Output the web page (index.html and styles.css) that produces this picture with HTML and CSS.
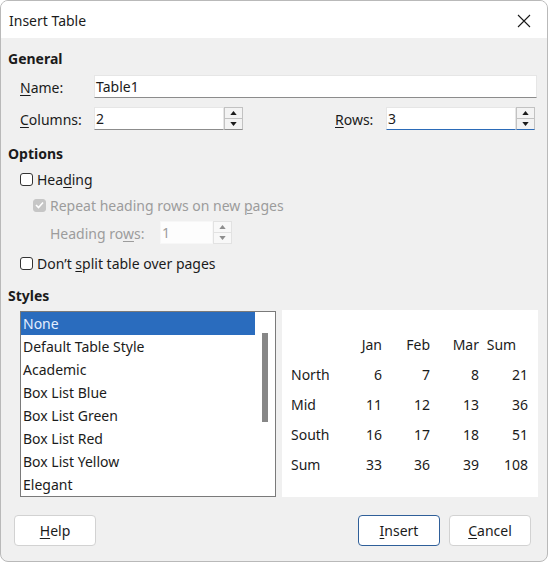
FILE: index.html
```html
<!DOCTYPE html>
<html lang="en">
<head>
  <meta charset="UTF-8">
  <title>Insert Table</title>
  <link rel="stylesheet" href="styles.css">
</head>
<body>
  <div class="dialog">
    <div class="titlebar">
      <span class="title">Insert Table</span>
      <svg class="close" width="14" height="14" viewBox="0 0 14 14"><path d="M1 1L13 13M13 1L1 13" stroke="#1a1a1a" stroke-width="1.1" fill="none"/></svg>
    </div>

    <div class="content">
      <div class="section first">General</div>
      <div class="row name-row">
        <span class="lbl"><u>N</u>ame:</span>
        <div class="field name-field">Table1</div>
      </div>
      <div class="row cols-row">
        <span class="lbl"><u>C</u>olumns:</span>
        <div class="spin">
          <div class="field">2</div>
          <div class="spin-btns">
            <span class="up"><svg width="8" height="5" viewBox="0 0 8 5"><polygon points="0,5 8,5 4,0"/></svg></span>
            <span class="down"><svg width="8" height="5" viewBox="0 0 8 5"><polygon points="0,0 8,0 4,5"/></svg></span>
          </div>
        </div>
        <span class="lbl rows-lbl"><u>R</u>ows:</span>
        <div class="spin focus">
          <div class="field">3</div>
          <div class="spin-btns">
            <span class="up"><svg width="8" height="5" viewBox="0 0 8 5"><polygon points="0,5 8,5 4,0"/></svg></span>
            <span class="down"><svg width="8" height="5" viewBox="0 0 8 5"><polygon points="0,0 8,0 4,5"/></svg></span>
          </div>
        </div>
      </div>

      <div class="section options">Options</div>
      <div class="check-row heading-row">
        <span class="box"></span>
        <span class="text">Hea<u>d</u>ing</span>
      </div>
      <div class="check-row repeat-row disabled">
        <span class="box checked">
          <svg width="9" height="8" viewBox="0 0 9 8"><path d="M1 4L3.5 6.5L8 1.5" stroke="#fff" stroke-width="1.6" fill="none"/></svg>
        </span>
        <span class="text">Repeat heading rows on new <u>p</u>ages</span>
      </div>
      <div class="row hrows-row disabled">
        <span class="lbl hrows-lbl">Heading ro<u>w</u>s:</span>
        <div class="spin small">
          <div class="field">1</div>
          <div class="spin-btns">
            <span class="up"><svg width="8" height="5" viewBox="0 0 8 5"><polygon points="0,5 8,5 4,0"/></svg></span>
            <span class="down"><svg width="8" height="5" viewBox="0 0 8 5"><polygon points="0,0 8,0 4,5"/></svg></span>
          </div>
        </div>
      </div>
      <div class="check-row split-row">
        <span class="box"></span>
        <span class="text">Don’t <u>s</u>plit table over pages</span>
      </div>

      <div class="section styles">Styles</div>
      <div class="styles-area">
        <div class="listbox">
          <ul class="items">
            <li class="selected">None</li>
            <li>Default Table Style</li>
            <li>Academic</li>
            <li>Box List Blue</li>
            <li>Box List Green</li>
            <li>Box List Red</li>
            <li>Box List Yellow</li>
            <li>Elegant</li>
          </ul>
          <div class="scrollbar"><div class="thumb"></div></div>
        </div>
        <div class="preview">
          <div class="ptable">
            <span></span><span class="num">Jan</span><span class="num">Feb</span><span class="num">Mar</span><span class="sum-head">Sum</span>
            <span>North</span><span class="num">6</span><span class="num">7</span><span class="num">8</span><span class="num">21</span>
            <span>Mid</span><span class="num">11</span><span class="num">12</span><span class="num">13</span><span class="num">36</span>
            <span>South</span><span class="num">16</span><span class="num">17</span><span class="num">18</span><span class="num">51</span>
            <span>Sum</span><span class="num">33</span><span class="num">36</span><span class="num">39</span><span class="num">108</span>
          </div>
        </div>
      </div>

      <div class="buttons">
        <button class="btn"><u>H</u>elp</button>
        <div class="right-buttons">
          <button class="btn default"><u>I</u>nsert</button>
          <button class="btn"><u>C</u>ancel</button>
        </div>
      </div>
    </div>
  </div>
</body>
</html>
```

FILE: styles.css
```css
body {
  margin: 0;
  padding: 0;
  font-family: "Noto Sans", Lato, sans-serif;
  font-size: 14px;
  color: #1b1b1b;
  background: #ffffff;
}

u {
  text-decoration-thickness: 1px;
  text-underline-offset: 2px;
}

.dialog {
  width: 548px;
  height: 562px;
  box-sizing: border-box;
  border: 1px solid #b9b9b9;
  border-radius: 8px;
  background: #f0f0f0;
  overflow: hidden;
}

.titlebar {
  height: 37px;
  background: #ffffff;
  display: flex;
  align-items: center;
  justify-content: space-between;
  padding: 0 16px 0 8px;
}

.title {
  padding-top: 1px;
}

.close {
  margin-top: 2px;
}

.content {
  padding: 0 0 0 7px;
}

.section {
  font-weight: bold;
  line-height: 21px;
  height: 20px;
}

.section.first { margin-top: 10px; }
.section.options { margin-top: 13px; }
.section.styles { margin-top: 12px; }

.row {
  display: flex;
  align-items: center;
  padding-left: 12px;
  height: 23px;
}

.name-row { margin-top: 7px; }
.cols-row { margin-top: 9px; }

.lbl {
  width: 74px;
  flex-shrink: 0;
  padding-top: 1px;
}

.field {
  box-sizing: border-box;
  height: 23px;
  line-height: 22px;
  padding-left: 1px;
  background: #ffffff;
  border: 1px solid #e6e6e6;
  border-bottom: 1px solid #8c8c8c;
}

.name-field {
  width: 443px;
}

.spin {
  display: flex;
  width: 149px;
  height: 23px;
}

.spin .field {
  width: 130px;
}

.spin-btns {
  width: 19px;
  height: 23px;
  box-sizing: border-box;
  border: 1px solid #c2c2c2;
  border-bottom-color: #8c8c8c;
  background: #f3f3f3;
  display: flex;
  flex-direction: column;
}

.spin-btns span {
  flex: 1;
  display: flex;
  align-items: center;
  justify-content: center;
}

.spin-btns .up {
  border-bottom: 1px solid #c2c2c2;
}

.spin-btns svg {
  width: 7px;
  height: 4px;
}

.spin-btns polygon {
  fill: #1b1b1b;
}

.rows-lbl {
  width: 51px;
  margin-left: 92px;
}

.spin.focus .field {
  border-bottom: 1px solid #2b6bb8;
}

.spin.focus .spin-btns {
  border-bottom-color: #2b6bb8;
}

.check-row {
  display: flex;
  align-items: center;
  height: 20px;
  padding-left: 12px;
  gap: 4px;
}

.check-row .text {
  padding-top: 1px;
}

.heading-row { margin-top: 6px; }
.repeat-row { margin-top: 6px; padding-left: 25px; }
.split-row { margin-top: 9px; }

.box {
  width: 13px;
  height: 13px;
  box-sizing: border-box;
  border: 1px solid #333333;
  border-radius: 3px;
  background: #ffffff;
  display: flex;
  align-items: center;
  justify-content: center;
}

.box.checked {
  background: #c6c6c6;
  border-color: #c6c6c6;
}

.disabled {
  color: #9c9c9c;
}

.hrows-row {
  margin-top: 6px;
  padding-left: 42px;
}

.hrows-lbl {
  width: 110px;
}

.spin.small {
  width: 72px;
}

.spin.small .field {
  width: 53px;
  border-color: #f7f7f7;
  border-bottom-color: #f7f7f7;
  background: #fdfdfd;
}

.spin.small .spin-btns {
  border-color: #e2e2e2;
  background: #f8f8f8;
}

.spin.small .spin-btns .up {
  border-bottom-color: #e2e2e2;
}

.spin.small polygon {
  fill: #8e8e8e;
}

.styles-area {
  display: flex;
  margin-top: 5px;
  padding-left: 12px;
  gap: 6px;
  height: 187px;
}

.listbox {
  width: 256px;
  height: 186px;
  margin-top: 1px;
  box-sizing: border-box;
  border: 1px solid #7a7a7a;
  background: #ffffff;
  display: flex;
}

.items {
  list-style: none;
  margin: 0;
  padding: 0;
  width: 234px;
}

.items li {
  height: 23px;
  line-height: 24px;
  padding-left: 2px;
}

.items li.selected {
  background: #2a6cbe;
  color: #e4eeff;
}

.scrollbar {
  flex: 1;
  position: relative;
}

.thumb {
  position: absolute;
  left: 7px;
  top: 21px;
  width: 6px;
  height: 89px;
  background: #878787;
}

.preview {
  width: 256px;
  height: 187px;
  background: #ffffff;
  box-sizing: border-box;
  padding: 19px 0 0 9px;
}

.ptable {
  display: grid;
  grid-template-columns: 43px 48px 48px 49px 49px;
  grid-auto-rows: 30px;
  align-items: center;
}

.ptable span {
  padding-top: 1px;
}

.ptable .num {
  text-align: right;
}

.ptable .sum-head {
  text-align: center;
  padding-right: 4px;
}

.buttons {
  display: flex;
  justify-content: space-between;
  margin-top: 18px;
  padding: 0 16px 0 6px;
}

.right-buttons {
  display: flex;
  gap: 9px;
}

.btn {
  width: 82px;
  height: 31px;
  padding-top: 1px;
  font-family: inherit;
  font-size: 14px;
  color: #1b1b1b;
  background: #ffffff;
  border: 1px solid #d2d2d2;
  border-radius: 4px;
}

.btn.default {
  border-color: #2f5f99;
}
```
